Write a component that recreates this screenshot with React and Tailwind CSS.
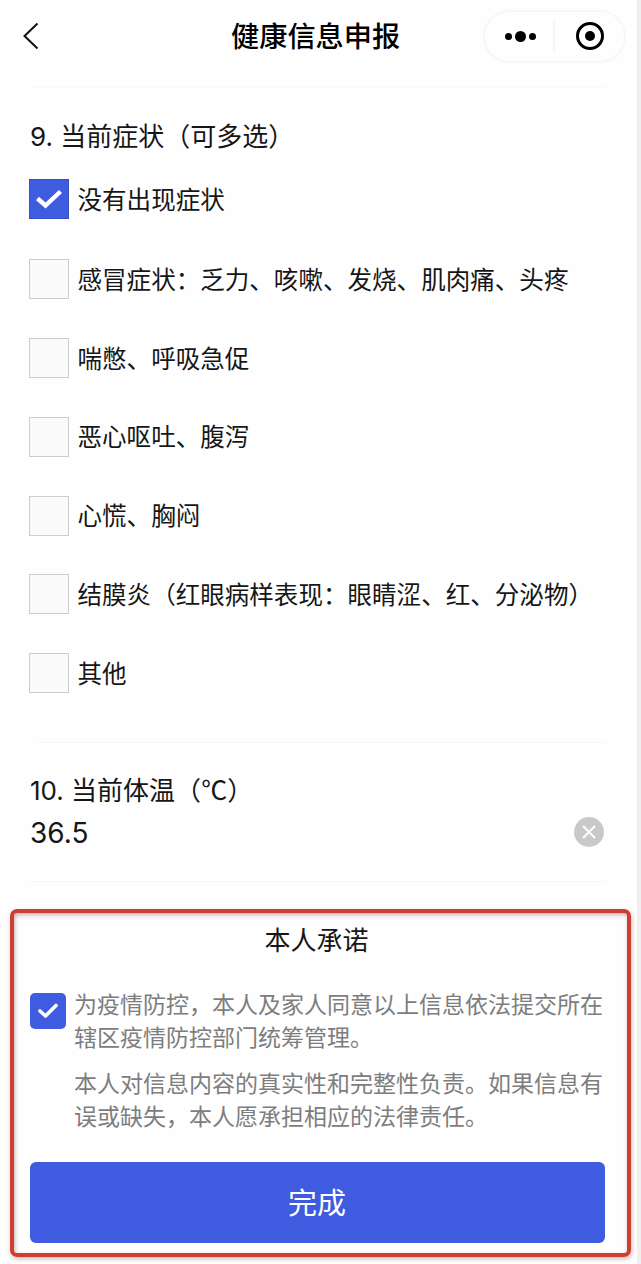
import { useState } from "react";

const symptoms = [
  "没有出现症状",
  "感冒症状：乏力、咳嗽、发烧、肌肉痛、头疼",
  "喘憋、呼吸急促",
  "恶心呕吐、腹泻",
  "心慌、胸闷",
  "结膜炎（红眼病样表现：眼睛涩、红、分泌物）",
  "其他",
];

function Header() {
  return (
    <header className="flex h-[72px] items-center pl-[22px] pr-[11px]">
      <button className="w-[143px]" aria-label="返回">
        <svg width="18" height="28" viewBox="0 0 18 28" fill="none" stroke="#111" strokeWidth="2">
          <path d="M15.5 1.5L2.5 14L15.5 26.5" />
        </svg>
      </button>
      <h1 className="ml-[66px] pt-0.5 text-[28.2px] font-medium whitespace-nowrap text-black">健康信息申报</h1>
      <div className="ml-auto flex h-[53px] w-[143px] items-center rounded-full border-2 border-[#f7f7f7]">
        <div className="flex h-8 w-[70px] items-center justify-center gap-[3px] border-r-2 border-[#f5f5f5] pl-0.5">
          <span className="size-[7px] rounded-full bg-black" />
          <span className="size-[11px] rounded-full bg-black" />
          <span className="size-[7px] rounded-full bg-black" />
        </div>
        <div className="flex flex-1 justify-center">
          <div className="flex size-7 items-center justify-center rounded-full border-3 border-black">
            <span className="size-[10px] rounded-full bg-black" />
          </div>
        </div>
      </div>
    </header>
  );
}

function SymptomOption({ label, checked, onToggle }) {
  return (
    <button className="flex items-center gap-[8.5px] text-left first:mb-[1.5px]" onClick={onToggle}>
      {checked ? (
        <span className="flex size-10 items-center justify-center border border-[#3550c4] bg-[#3f5be0]">
          <svg width="28" height="22" viewBox="0 0 28 22" fill="none" stroke="#fff" strokeWidth="4.4">
            <path d="M2.5 10.5L10.5 17.5L25.5 3.5" />
          </svg>
        </span>
      ) : (
        <span className="size-10 border-[1.5px] border-[#cdcdcd] bg-[#fafafa]" />
      )}
      <span className="pt-px text-[24.55px] leading-10 whitespace-nowrap">{label}</span>
    </button>
  );
}

export default function App() {
  const [selected, setSelected] = useState([0]);

  const toggle = (index) => {
    setSelected((prev) =>
      prev.includes(index) ? prev.filter((i) => i !== index) : [...prev, index]
    );
  };

  return (
    <div className="h-[1264px] w-[641px] overflow-hidden border-r-4 border-[#efefef] bg-[#fefefe] font-['Inter','Noto_Sans_CJK_SC',sans-serif] text-[#161616]">
      <Header />

      <section className="pr-[30px] pl-[29px] pt-[14px]">
        <div className="mr-[3px] ml-[5px] h-0.5 bg-[#fafafa]" />
        <h2 className="mt-[29px] pl-px text-[26px] leading-10">9. 当前症状（可多选）</h2>
        <div className="mt-[21.5px] flex flex-col gap-[37.8px]">
          {symptoms.map((label, index) => (
            <SymptomOption
              key={index}
              label={label}
              checked={selected.includes(index)}
              onToggle={() => toggle(index)}
            />
          ))}
        </div>
      </section>

      <section className="mt-[48px] pr-[30px] pl-[29px]">
        <div className="ml-2 h-px bg-[#f7f7f7]" />
        <h2 className="mt-[26px] pl-px text-[26px] leading-10">
          10. 当前体温（<span className="font-['Noto_Sans_CJK_SC',sans-serif]">℃</span>）
        </h2>
        <div className="flex h-[42px] items-center justify-between pr-[3px] pl-px">
          <span className="pt-0.5 text-[28px]">36.5</span>
          <button className="flex size-[30px] items-center justify-center rounded-full bg-[#c9c9c9]" aria-label="清除">
            <svg width="14" height="14" viewBox="0 0 14 14" stroke="#fff" strokeWidth="2">
              <path d="M1 1L13 13M13 1L1 13" />
            </svg>
          </button>
        </div>
        <div className="mt-[28px] h-px bg-[#f7f7f7]" />
      </section>

      <section className="mt-[27px] ml-[10px] h-[348px] w-[621px] rounded-[7px] border-[4.5px] border-[#cd3e33] px-[15.5px] shadow-[1px_2px_4px_rgba(120,60,60,0.35),inset_1px_2px_4px_rgba(120,60,60,0.4)]">
        <h2 className="mt-[8px] pr-2 text-center text-[26px] leading-10">本人承诺</h2>
        <div className="mt-[28px] flex gap-[8.5px]">
          <span className="mt-[4px] flex size-9 shrink-0 items-center justify-center rounded-[5px] bg-[#3f5be0]">
            <svg width="22" height="18" viewBox="0 0 22 18" fill="none" stroke="#fff" strokeWidth="3.6" strokeLinecap="round" strokeLinejoin="round">
              <path d="M3 9L8.5 14L19 3.5" />
            </svg>
          </span>
          <div className="text-[23px] leading-[33px] whitespace-nowrap text-[#7d7d7d]">
            <p>
              为疫情防控，本人及家人同意以上信息依法提交所在
              <br />
              辖区疫情防控部门统筹管理。
            </p>
            <p className="mt-[13px]">
              本人对信息内容的真实性和完整性负责。如果信息有
              <br />
              误或缺失，本人愿承担相应的法律责任。
            </p>
          </div>
        </div>
        <button className="mt-[28px] h-[81px] w-[575px] rounded-[6px] bg-[#3f5be0] pt-0.5 text-[29px] text-white">
          完成
        </button>
      </section>
    </div>
  );
}
